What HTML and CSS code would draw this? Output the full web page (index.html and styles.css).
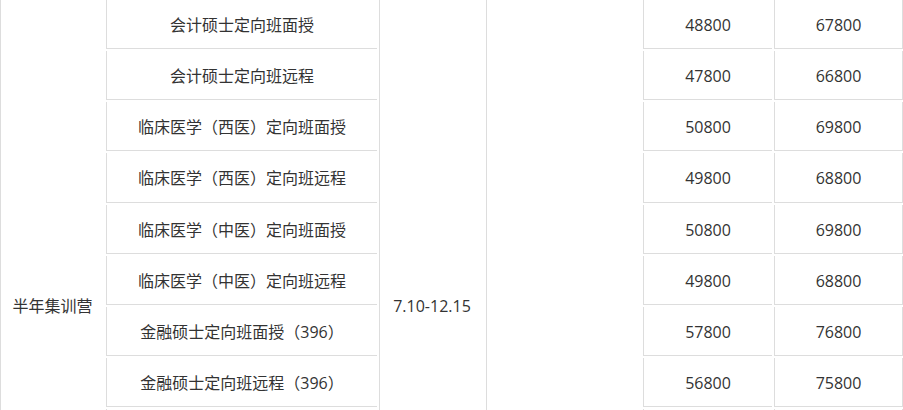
FILE: index.html
```html
<!DOCTYPE html>
<html lang="zh-CN">
<head>
<meta charset="utf-8">
<title>半年集训营</title>
<link rel="stylesheet" href="styles.css">
</head>
<body>
<table class="fee-table">
  <colgroup>
    <col class="c-name">
    <col class="c-course">
    <col class="c-date">
    <col class="c-blank">
    <col class="c-price">
    <col class="c-price">
  </colgroup>
  <tbody>
    <tr>
      <td class="span-cell" rowspan="12">半年集训营</td>
      <td>会计硕士定向班面授</td>
      <td class="span-cell" rowspan="12">7.10-12.15</td>
      <td class="span-cell" rowspan="12"></td>
      <td>48800</td>
      <td class="last">67800</td>
    </tr>
    <tr><td>会计硕士定向班远程</td><td>47800</td><td class="last">66800</td></tr>
    <tr><td>临床医学（西医）定向班面授</td><td>50800</td><td class="last">69800</td></tr>
    <tr><td>临床医学（西医）定向班远程</td><td>49800</td><td class="last">68800</td></tr>
    <tr><td>临床医学（中医）定向班面授</td><td>50800</td><td class="last">69800</td></tr>
    <tr><td>临床医学（中医）定向班远程</td><td>49800</td><td class="last">68800</td></tr>
    <tr><td>金融硕士定向班面授（396）</td><td>57800</td><td class="last">76800</td></tr>
    <tr><td>金融硕士定向班远程（396）</td><td>56800</td><td class="last">75800</td></tr>
    <tr><td></td><td></td><td class="last"></td></tr>
    <tr><td></td><td></td><td class="last"></td></tr>
    <tr><td></td><td></td><td class="last"></td></tr>
    <tr><td></td><td></td><td class="last"></td></tr>
  </tbody>
</table>
</body>
</html>
```

FILE: styles.css
```css
html, body {
  margin: 0;
  padding: 0;
  overflow: hidden;
  background: #fff;
}

.fee-table {
  margin: -2px 0 0 -2px;
  border-collapse: separate;
  border-spacing: 2px;
  table-layout: fixed;
  width: 907px;
  font-family: "Open Sans", "Noto Sans CJK SC", sans-serif;
  font-size: 16px;
  color: #333;
}

.c-name { width: 104px; }
.c-course { width: 271px; }
.c-date { width: 105px; }
.c-blank { width: 155px; }
.c-price { width: 129px; }

.fee-table td {
  box-sizing: border-box;
  height: 49.14px;
  padding: 2px 0 0;
  text-align: center;
  vertical-align: middle;
  line-height: 22px;
  border-left: 1px solid #ddd;
  border-bottom: 1px solid #ddd;
  white-space: nowrap;
}

.fee-table td.last {
  border-right: 1px solid #ddd;
}
```
